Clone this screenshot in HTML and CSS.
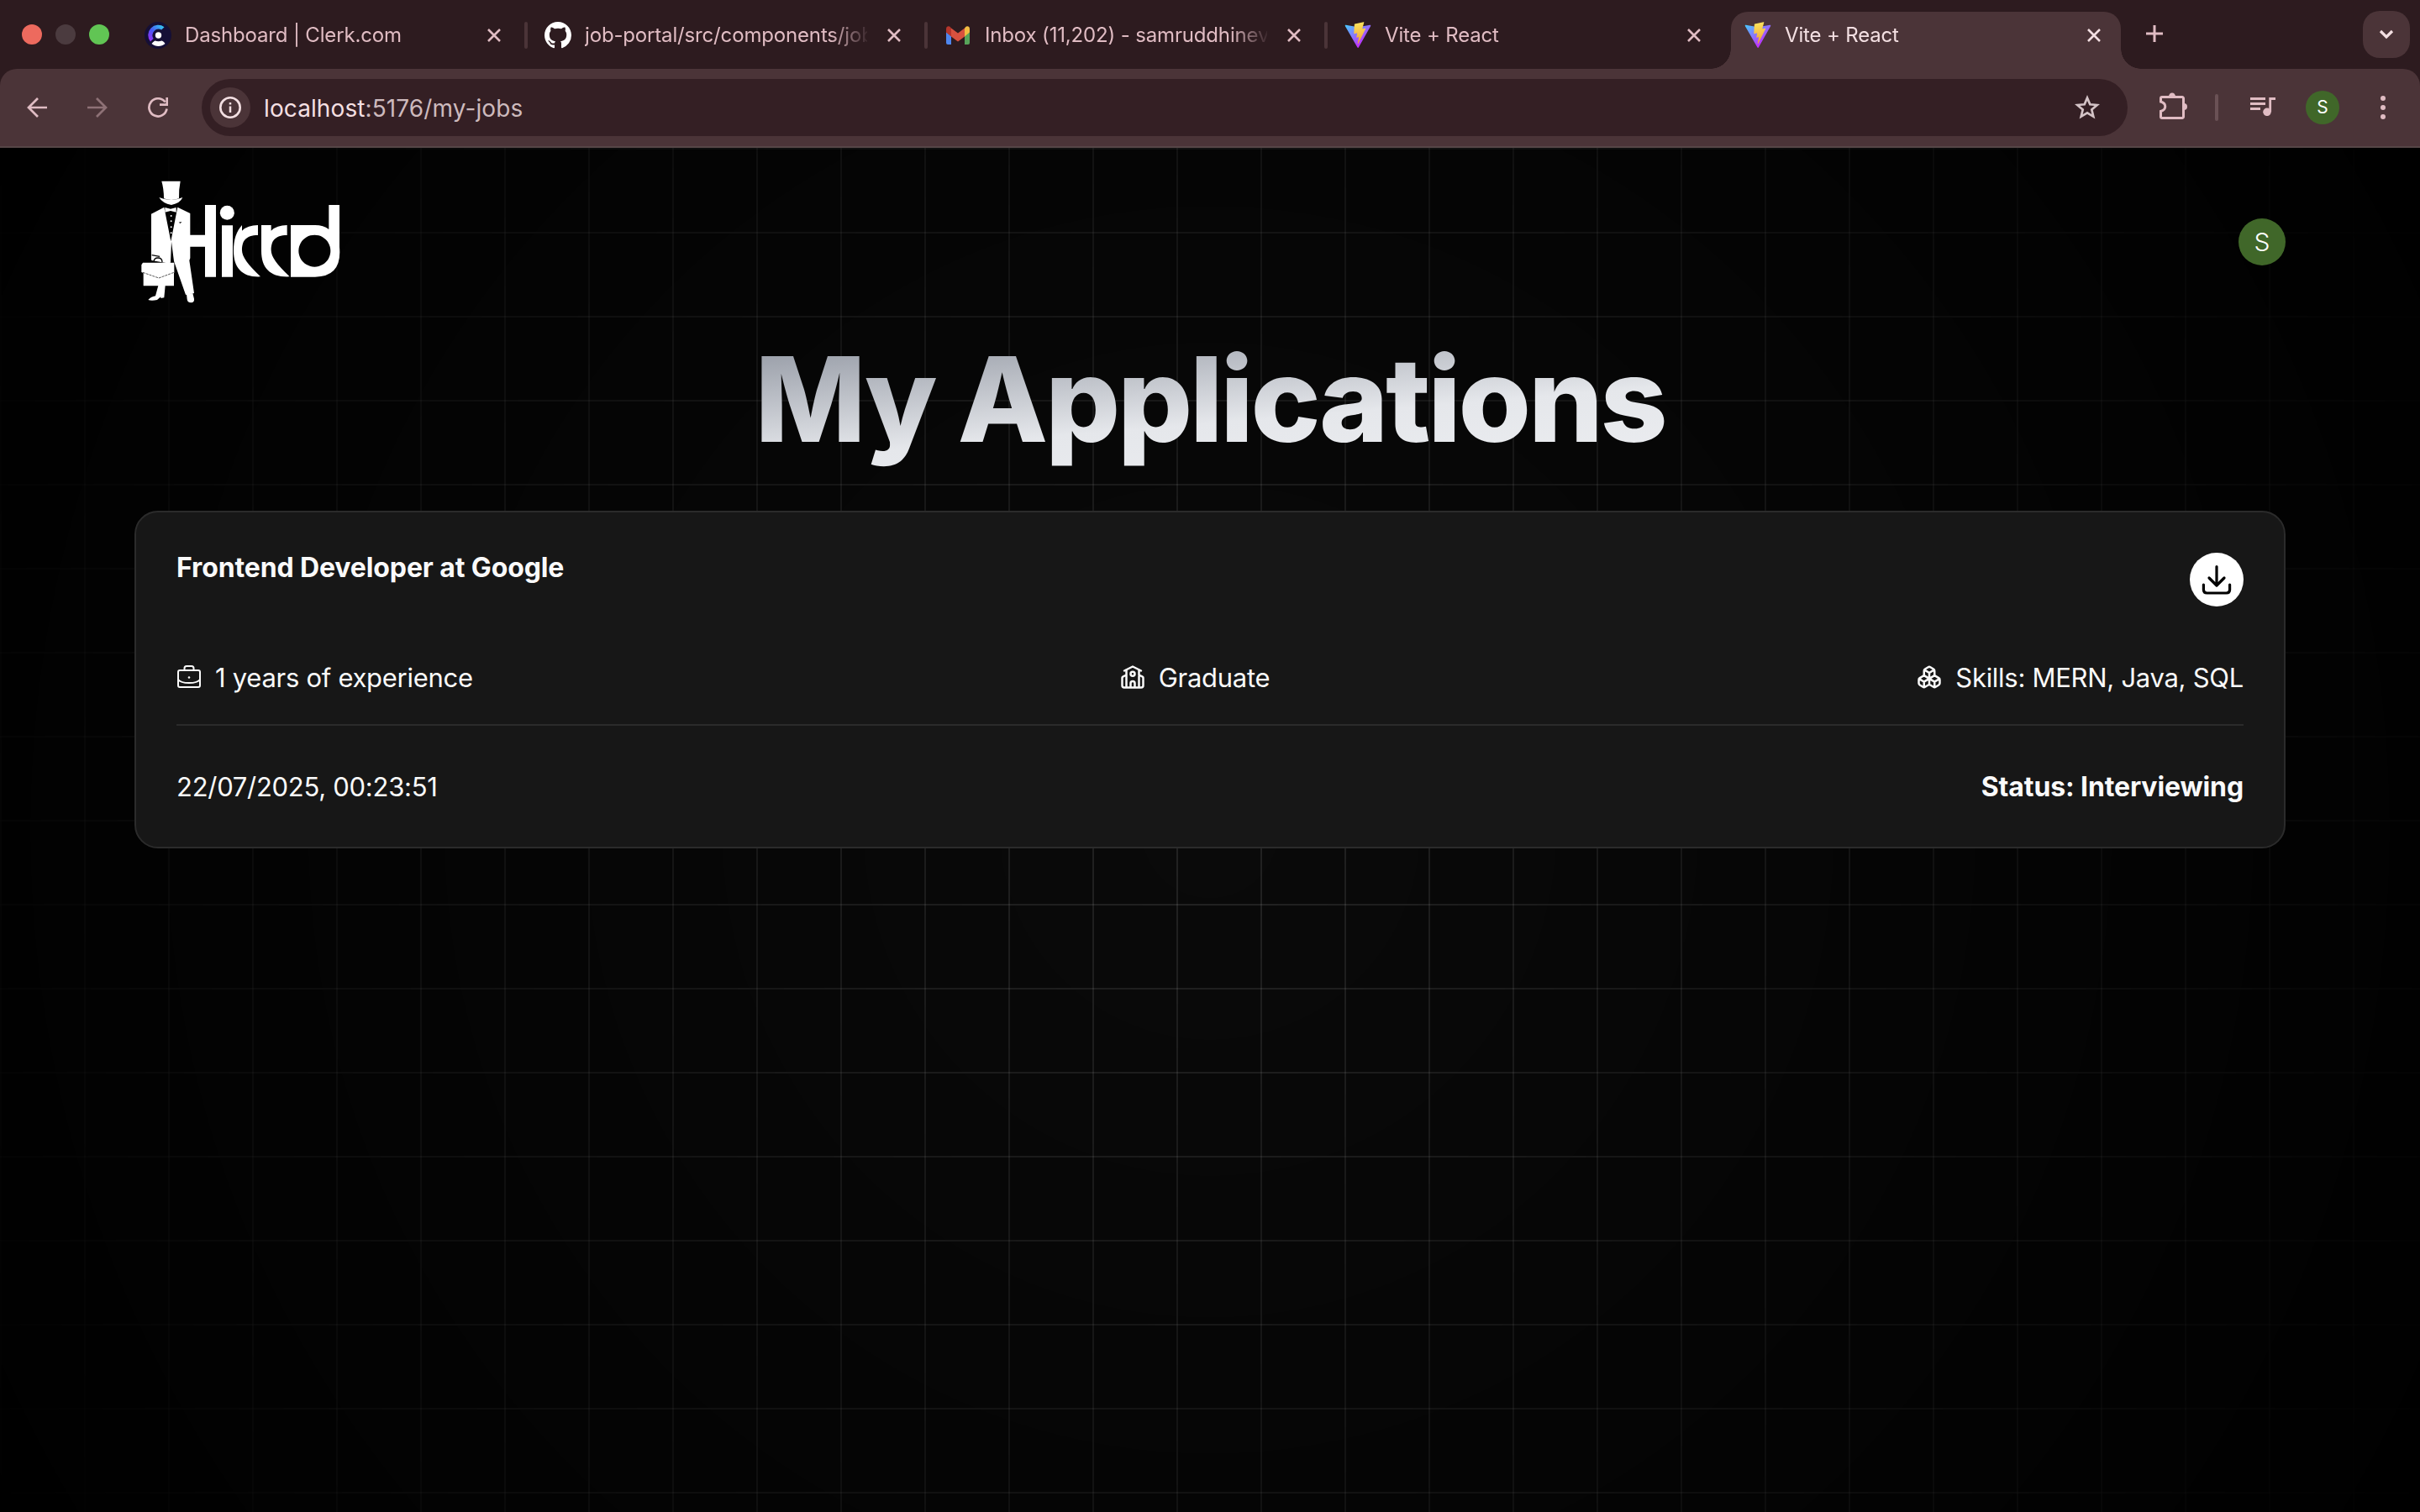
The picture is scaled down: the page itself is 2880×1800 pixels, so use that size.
FILE: index.html
```html
<!DOCTYPE html>
<html lang="en">
<head>
<meta charset="utf-8">
<title>Vite + React</title>
<link rel="stylesheet" href="styles.css">
</head>
<body>
<svg class="defs" width="0" height="0">
  <defs>
    <linearGradient id="vite-a" x1="6" y1="33" x2="235" y2="344" gradientUnits="userSpaceOnUse" gradientTransform="translate(0 .937) scale(.3122)"><stop stop-color="#41d1ff"/><stop offset="1" stop-color="#bd34fe"/></linearGradient>
    <linearGradient id="vite-b" x1="60" y1="4" x2="74" y2="92" gradientUnits="userSpaceOnUse"><stop stop-color="#fbe45c"/><stop offset="1" stop-color="#f0a63a"/></linearGradient>
    <linearGradient id="clerk" x1="22" y1="6" x2="6" y2="24" gradientUnits="userSpaceOnUse"><stop stop-color="#35c4f0"/><stop offset=".5" stop-color="#4a55f5"/><stop offset="1" stop-color="#a22bf5"/></linearGradient>
    <symbol id="vite" viewBox="0 0 128 128">
      <path fill="url(#vite-a)" d="M124.766 19.52 67.324 122.238c-1.187 2.121-4.234 2.133-5.437.024L3.305 19.532c-1.313-2.302.652-5.087 3.261-4.622L64.07 25.187a3.09 3.09 0 0 0 1.11 0l56.3-10.261c2.598-.473 4.575 2.289 3.286 4.594Z"/>
      <path fill="url(#vite-b)" d="M91.46 1.43 48.954 9.758a1.56 1.56 0 0 0-1.258 1.437l-2.617 44.168a1.563 1.563 0 0 0 1.91 1.614l11.836-2.735a1.562 1.562 0 0 1 1.88 1.836l-3.517 17.219a1.562 1.562 0 0 0 1.985 1.805l7.308-2.223a1.56 1.56 0 0 1 1.985 1.812l-5.586 27.047c-.352 1.692 1.898 2.614 2.836 1.164l.625-.968 34.64-69.13c.582-1.16-.421-2.48-1.69-2.234l-12.185 2.352a1.558 1.558 0 0 1-1.793-1.965l7.95-27.562A1.56 1.56 0 0 0 91.46 1.43Z"/>
    </symbol>
    <symbol id="close" viewBox="0 0 16 16"><path d="M1 1l14 14M15 1L1 15" stroke="currentColor" stroke-width="2.6" fill="none"/></symbol>
  </defs>
</svg>

<header class="browser">
  <div class="tabstrip">
    <div class="lights"><i class="light red"></i><i class="light grey"></i><i class="light green"></i></div>
    <div class="tabs">
      <div class="tab">
        <svg class="favicon" viewBox="0 0 32 32"><circle cx="16" cy="16" r="16" fill="#150f36"/><path d="M23.5 6.2A12 12 0 0 0 7 23.4l3.6-3.5A7.3 7.3 0 0 1 20.2 9.6Z" fill="url(#clerk)"/><circle cx="16.5" cy="16" r="3.7" fill="#fff"/><path d="M8.5 26c1.500-2 3-2.800 4-3.500 2.500 1 5.500 1 8 0 1.500.7 3 1.800 4 3.500-4.500 4-11.500 4-16 0Z" fill="#fff"/></svg>
        <span class="tab-title">Dashboard | Clerk.com</span>
        <svg class="close"><use href="#close"/></svg>
      </div>
      <div class="tab">
        <svg class="favicon" viewBox="0 0 16 16"><path fill="#fff" d="M8 0C3.580 0 0 3.580 0 8c0 3.540 2.290 6.530 5.470 7.590.4.070.55-.17.55-.38 0-.19-.01-.82-.01-1.490-2.010.37-2.530-.49-2.690-.94-.09-.23-.48-.94-.82-1.130-.28-.15-.68-.52-.01-.53.63-.01 1.080.58 1.230.82.72 1.210 1.870.87 2.330.66.070-.52.28-.87.51-1.070-1.780-.2-3.640-.89-3.640-3.950 0-.87.31-1.590.82-2.150-.08-.2-.36-1.020.08-2.120 0 0 .67-.21 2.200.82.64-.18 1.320-.27 2-.27s1.360.09 2 .27c1.530-1.040 2.200-.82 2.200-.82.44 1.100.16 1.920.08 2.120.51.56.82 1.270.82 2.150 0 3.070-1.870 3.750-3.650 3.950.29.25.54.73.54 1.480 0 1.070-.01 1.930-.01 2.200 0 .21.15.46.55.38A8.010 8.010 0 0 0 16 8c0-4.420-3.580-8-8-8Z"/></svg>
        <span class="tab-title">job-portal/src/components/job</span>
        <svg class="close"><use href="#close"/></svg>
      </div>
      <div class="tab">
        <svg class="favicon" viewBox="0 0 32 32"><path fill="#4e86ee" d="M2 12v13a2 2 0 0 0 2 2h4V17Z"/><path fill="#57a55a" d="M30 12v13a2 2 0 0 1-2 2h-4V17Z"/><path fill="#d8513f" d="M8 7.500v10L16 23.500l8-6v-10L16 13.500Z"/><path fill="#b5362c" d="M2 8.500C2 5 5.500 4.600 7.200 6.500L8 7.500v10L2 12.500Z"/><path fill="#f2bd42" d="M30 8.500C30 5 26.500 4.600 24.800 6.500L24 7.500v10l6-5Z"/></svg>
        <span class="tab-title">Inbox (11,202) - samruddhinev</span>
        <svg class="close"><use href="#close"/></svg>
      </div>
      <div class="tab">
        <svg class="favicon"><use href="#vite"/></svg>
        <span class="tab-title">Vite + React</span>
        <svg class="close"><use href="#close"/></svg>
      </div>
      <div class="tab active">
        <svg class="favicon"><use href="#vite"/></svg>
        <span class="tab-title">Vite + React</span>
        <svg class="close"><use href="#close"/></svg>
      </div>
    </div>
    <svg class="new-tab" viewBox="0 0 20 20"><path d="M10 0v20M0 10h20" stroke="currentColor" stroke-width="3"/></svg>
    <div class="tab-search"><svg width="18" height="12" viewBox="0 0 18 12"><path d="M2 2l7 7 7-7" fill="none" stroke="currentColor" stroke-width="3.200"/></svg></div>
  </div>
  <div class="toolbar">
    <div class="nav">
      <svg viewBox="0 0 24 24"><path d="M24 12H2M13 1L2 12l11 11" fill="none" stroke="currentColor" stroke-width="2.700"/></svg>
      <svg class="off" viewBox="0 0 24 24"><path d="M0 12h22M11 1l11 11-11 11" fill="none" stroke="currentColor" stroke-width="2.700"/></svg>
      <svg viewBox="0 0 24 24"><path d="M22.500 13.500A10.600 10.600 0 1 1 20.500 5.500M22.700 0v8.700H14" fill="none" stroke="currentColor" stroke-width="2.700"/></svg>
    </div>
    <div class="omnibox">
      <div class="info"><svg width="26" height="26" viewBox="0 0 26 26"><circle cx="13" cy="13" r="11.700" fill="none" stroke="currentColor" stroke-width="2.600"/><path d="M13 11.500V19M13 7v2.500" stroke="currentColor" stroke-width="2.500"/></svg></div>
      <span class="url"><b>localhost</b>:5176/my-jobs</span>
      <svg class="star" viewBox="0 0 30 30"><path d="M15 3.500l3.300 7.800 8.500.7-6.500 5.500 2 8.300L15 21.400l-7.300 4.400 2-8.300L3.200 12l8.500-.7Z" fill="none" stroke="currentColor" stroke-width="2.700"/></svg>
    </div>
    <div class="actions">
      <svg class="puzzle" viewBox="0 0 34 34"><path d="M4 6.500h24a1.500 1.500 0 0 1 1.500 1.500v22a1.500 1.500 0 0 1-1.500 1.500H4A1.500 1.500 0 0 1 2.500 30v-6.500c7-2 7-9.500 0-11.500V8A1.500 1.500 0 0 1 4 6.500Z" fill="none" stroke="currentColor" stroke-width="3"/><path d="M12 6a4 4.500 0 0 1 8 0ZM30 14a4 4 0 0 1 0 8Z" fill="currentColor"/></svg>
      <i class="divider"></i>
      <svg class="media" viewBox="0 0 30 22"><path d="M0 1.500h18M0 7.500h18M0 13.500h12M30 1.500h-6.300V17" fill="none" stroke="currentColor" stroke-width="2.800"/><circle cx="20" cy="17.300" r="4.800" fill="currentColor"/></svg>
      <div class="profile">S</div>
      <svg class="dots" viewBox="0 0 6 30"><circle cx="3" cy="4" r="3" fill="currentColor"/><circle cx="3" cy="15" r="3" fill="currentColor"/><circle cx="3" cy="26" r="3" fill="currentColor"/></svg>
    </div>
  </div>
</header>

<main class="page">
  <nav class="site-nav">
    <svg class="logo" viewBox="0 0 900 570" role="img" aria-label="Hirrd">
      <g fill="#fff">
        <path d="M157 77h67q-6 30-5 62-28 10-54 0 0-35-8-62Z"/>
        <path d="M148 135q44 18 84 0-8 20-40 27-32-6-44-27Z"/>
        <path d="M166 170l24 122 24-122 45 22v160l-3 8 17 117-30 6-42-120-9-70-3 75-12 2-56-10-1-5V194Z"/>
        <path d="M169 171l20 5 20-5v17l-20-5-20 5Z"/>
        <circle cx="191" cy="201" r="3"/><circle cx="191" cy="220" r="3"/><circle cx="191" cy="241" r="3"/><circle cx="191" cy="262" r="3"/>
        <path d="M90 368h112v36h-1v47H92v-46l-7-3v-26Z"/>
        <path d="M145 450h25l-4 43-12 2v-5l-13 11q-20 4-32 0 8-10 26-14Z"/>
        <path d="M246 480l22-3 5 20q2 12-11 14-13 0-14-12Z"/>
        <path d="M312 162h39v257h-39V311h-54v-42h54ZM372 235h39v184h-39Z"/>
        <circle cx="391" cy="190" r="25.500"/>
        <path d="M444 234v20q20-20 57-20v36c-45 0-57 22-57 54 0 22 20 50 66 94-65 3-96-32-96-92 0-40 10-70 30-92ZM513 234h35v20q20-20 57-20v36c-45 0-57 22-57 54 0 22 20 50 66 94-70 3-101-32-101-92Z"/>
        <path fill-rule="evenodd" d="M618 234h87q30 0 49 15v-87h38v150q10 106-87 107h-87ZM703 269a57 57 0 1 0 .1 0Z"/>
      </g>
      <path d="M129 366q0-15 15-15t15 15M122 341l28 5" fill="none" stroke="#040404" stroke-width="4"/>
      <path d="M90 403l57 20 54-20" fill="none" stroke="#040404" stroke-width="2" stroke-dasharray="9 3"/>
      <path d="M218 224l11-2-5 6Z" fill="#040404"/>
    </svg>
    <div class="avatar">S</div>
  </nav>
  <h1>My Applications</h1>
  <section class="card">
    <div class="card-head">
      <h2>Frontend Developer at Google</h2>
      <div class="download"><svg width="36" height="36" viewBox="0 0 18 18"><path d="M9 1.300v11M4.500 8L9 12.500 13.500 8M1.200 12v3q0 2 2 2h11.600q2 0 2-2v-3" fill="none" stroke="#000" stroke-width="1.600" stroke-linecap="round" stroke-linejoin="round"/></svg></div>
    </div>
    <div class="facts">
      <div class="fact">
        <svg viewBox="0 0 30 30"><g fill="none" stroke="currentColor" stroke-width="2" stroke-linejoin="round"><rect x="2" y="7" width="26" height="20" rx="2"/><path d="M9.500 7V4.500Q9.500 2 12 2h6q2.500 0 2.500 2.500V7M2 18q3 4 13 4t13-4"/></g><circle cx="15" cy="15.500" r="1.300" fill="currentColor"/></svg>
        <span>1 years of experience</span>
      </div>
      <div class="fact">
        <svg viewBox="0 0 24 24"><g fill="none" stroke="currentColor" stroke-width="2" stroke-linecap="round" stroke-linejoin="round"><path d="M14 22v-4a2 2 0 1 0-4 0v4M18 5v17M4 6l8-4 8 4M6 5v17M18 10l3.400 1.700a1 1 0 0 1 .6.900V20a2 2 0 0 1-2 2H4a2 2 0 0 1-2-2v-7.400a1 1 0 0 1 .6-.9L6 10"/><circle cx="12" cy="9" r="2"/></g></svg>
        <span>Graduate</span>
      </div>
      <div class="fact">
        <svg viewBox="0 0 24 24"><path d="M2.970 12.920A2 2 0 0 0 2 14.630v3.240a2 2 0 0 0 .97 1.710l3 1.800a2 2 0 0 0 2.060 0L12 19v-5.500l-5-3-4.030 2.420ZM7 16.500l-4.740-2.850M7 16.500l5-3M7 16.500v5.170M12 13.500V19l3.970 2.380a2 2 0 0 0 2.060 0l3-1.800a2 2 0 0 0 .97-1.710v-3.240a2 2 0 0 0-.97-1.710L17 10.500l-5 3ZM17 16.500l-5-3M17 16.500l4.740-2.850M17 16.500v5.170M7.970 4.420A2 2 0 0 0 7 6.130v4.370l5 3 5-3V6.130a2 2 0 0 0-.97-1.710l-3-1.800a2 2 0 0 0-2.060 0l-3 1.800ZM12 8 7.260 5.150M12 8l4.740-2.850M12 13.500V8" fill="none" stroke="currentColor" stroke-width="2" stroke-linecap="round" stroke-linejoin="round"/></svg>
        <span>Skills: MERN, Java, SQL</span>
      </div>
    </div>
    <div class="card-foot">
      <span>22/07/2025, 00:23:51</span>
      <strong>Status: Interviewing</strong>
    </div>
  </section>
</main>
</body>
</html>
```
FILE: styles.css
```css
* { box-sizing: border-box; }
body { margin: 0; width: 2880px; height: 1800px; overflow: hidden; display: flex; flex-direction: column; background: #000; font-family: Inter, "Liberation Sans", sans-serif; }
svg { display: block; flex: none; }
.defs { position: absolute; }

/* Browser chrome */
.browser { flex: none; height: 176px; background: #2d1b1f; color: #e0bcc3; }
.tabstrip { display: flex; height: 82px; align-items: center; }
.lights { display: flex; gap: 16px; padding-left: 26px; width: 156px; }
.light { width: 24px; height: 24px; border-radius: 50%; }
.red { background: #ed6a5e; }
.grey { background: #4b3b3f; }
.green { background: #61c554; }
.tabs { display: flex; align-self: stretch; }
.tab { position: relative; width: 476px; display: flex; align-items: center; padding: 2px 0 0 16px; }
.tab:nth-child(-n+3)::after { content: ""; position: absolute; left: 468px; top: 26px; width: 4px; height: 32px; border-radius: 2px; background: #4b3438; }
.tab.active { width: 464px; height: 68px; margin-top: 14px; padding: 0 0 12px 16px; background: #4b3438; border-radius: 20px 20px 0 0; color: #f3dfe2; }
.tab.active::before, .tab.active::after { content: ""; position: absolute; bottom: 0; width: 24px; height: 24px; }
.tab.active::before { right: 100%; background: radial-gradient(circle at 0 0, transparent 23.5px, #4b3438 24px); }
.tab.active::after { left: 100%; background: radial-gradient(circle at 100% 0, transparent 23.5px, #4b3438 24px); }
.favicon { width: 32px; height: 32px; }
.tab-title { width: 336px; margin-left: 16px; font-size: 24px; line-height: 32px; letter-spacing: -.16px; white-space: nowrap; -webkit-mask-image: linear-gradient(to right, #000 292px, transparent 340px); mask-image: linear-gradient(to right, #000 292px, transparent 340px); }
.close { width: 16px; height: 16px; margin-left: 24px; }
.new-tab { width: 20px; height: 20px; margin: -2px 0 0 30px; }
.tab-search { width: 56px; height: 56px; margin-left: auto; margin-right: 12px; border-radius: 20px; background: #4b3438; color: #f3dfe2; display: grid; place-items: center; }

.toolbar { height: 94px; background: #4b3438; border-bottom: 2px solid #564647; border-radius: 20px 20px 0 0; display: flex; align-items: center; }
.nav { width: 240px; padding-left: 32px; display: flex; gap: 48px; }
.nav svg { width: 24px; height: 24px; }
.off { opacity: .45; }
.omnibox { width: 2292px; height: 68px; border-radius: 34px; background: #341f24; display: flex; align-items: center; padding: 0 33px 0 10px; }
.info { width: 48px; height: 48px; border-radius: 50%; background: #4b3438; color: #f3dfe2; display: grid; place-items: center; margin-right: 16px; }
.url { flex: 1; font-size: 28px; line-height: 36px; letter-spacing: .1px; padding-top: 1px; color: #cdbabd; }
.url b { font-weight: 400; color: #f3dfe2; }
.star { width: 30px; height: 30px; color: #d3c3c6; }
.actions { display: flex; align-items: center; padding-left: 37px; }
.puzzle { width: 34px; height: 34px; margin-top: -4px; }
.divider { width: 4px; height: 32px; border-radius: 2px; background: #6a5155; margin: 0 38px 0 33px; }
.media { width: 30px; height: 22px; margin-top: -2px; }
.profile { width: 40px; height: 40px; border-radius: 50%; background: #406729; color: #fff; font-size: 21px; line-height: 40px; text-align: center; margin: 0 49px 0 36px; }
.dots { width: 6px; height: 30px; }

/* Page with a faded grid behind it */
.page { position: relative; flex: 1; padding: 0 160px; color: #fafafa; background: #000; isolation: isolate; }
.page::before {
  content: ""; position: absolute; inset: 0; z-index: -1;
  background-color: #0a0a0a;
  background-image: linear-gradient(to right, rgba(255, 255, 255, .1) 2px, transparent 2px), linear-gradient(to bottom, rgba(255, 255, 255, .1) 2px, transparent 2px);
  background-size: 100px 100px;
  -webkit-mask-image: radial-gradient(circle at center, #000, transparent);
  mask-image: radial-gradient(circle at center, #000, transparent);
}
.site-nav { display: flex; justify-content: space-between; align-items: center; height: 224px; }
.logo { width: 300px; height: 190px; margin: -6px 0 0 -20px; }
.avatar { width: 56px; height: 56px; border-radius: 50%; background: #406729; color: #fff; font-size: 30px; font-weight: 300; line-height: 57px; text-align: center; }
h1 { margin: 0; height: 208px; padding: 3px 0 29px; font-size: 140px; line-height: 144px; font-weight: 800; letter-spacing: -3.3px; text-align: center; color: transparent; background: linear-gradient(to bottom right, #6b7280, #e5e7eb 50%, #f3f4f6); -webkit-background-clip: text; background-clip: text; }
.card { height: 402px; border: 2px solid #2b2b2b; border-radius: 28px; background: #171717; padding: 48px; font-size: 31px; line-height: 48px; letter-spacing: -.28px; }
.card-head { display: flex; justify-content: space-between; align-items: flex-start; height: 124px; }
h2 { margin: 0; padding-top: 2px; font-size: 32px; line-height: 32px; font-weight: 700; letter-spacing: -.12px; }
.download { width: 64px; height: 64px; border-radius: 50%; background: #fff; display: grid; place-items: center; }
.facts { display: flex; justify-content: space-between; height: 82px; border-bottom: 2px solid #2b2b2b; }
.fact { display: flex; height: 48px; gap: 16px; }
.fact svg { width: 30px; height: 30px; margin-top: 9px; }
.fact span, .card-foot span { padding-top: 1px; }
.card-foot { display: flex; justify-content: space-between; padding-top: 48px; }
.card-foot strong { padding-top: 1px; font-size: 32px; font-weight: 700; letter-spacing: -.12px; }
```
